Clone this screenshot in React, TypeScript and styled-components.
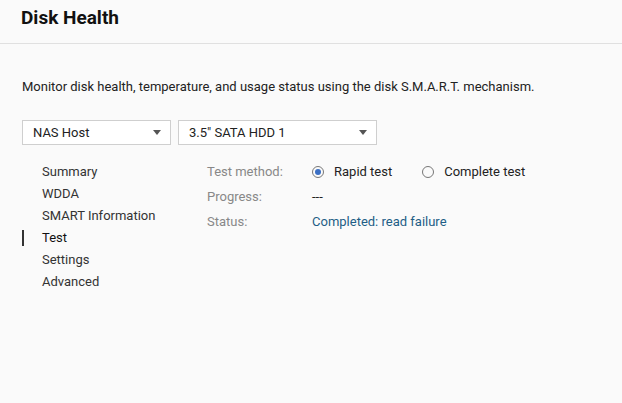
import styled, { createGlobalStyle } from 'styled-components';

const GlobalStyle = createGlobalStyle`
  html, body {
    margin: 0;
    padding: 0;
    background: #fafafa;
    font-family: Roboto, "Liberation Sans", Arial, sans-serif;
  }
`;

const Page = styled.div`
  width: 622px;
  height: 403px;
  background: #fafafa;
  overflow: hidden;
`;

const Header = styled.header`
  height: 43px;
  border-bottom: 1px solid #e0e0e0;
  padding: 0 21px;
  display: flex;
  align-items: flex-start;
`;

const Title = styled.h1`
  margin: 5px 0 0;
  font-size: 19px;
  font-weight: 700;
  color: #111;
  line-height: 26px;
`;

const Content = styled.div`
  padding: 33px 22px 0;
`;

const Description = styled.p`
  margin: 0;
  font-size: 13px;
  line-height: 20px;
  color: #222;
`;

const Selects = styled.div`
  display: flex;
  gap: 7px;
  margin-top: 23px;
`;

const Select = styled.div<{ $width: number }>`
  width: ${(p) => p.$width}px;
  height: 25px;
  box-sizing: border-box;
  border: 1px solid #cfcfcf;
  background: #fff;
  display: flex;
  align-items: center;
  justify-content: space-between;
  padding: 0 9px 0 10px;
  font-size: 13px;
  color: #222;
`;

const Caret = styled.span`
  width: 0;
  height: 0;
  border-left: 4px solid transparent;
  border-right: 4px solid transparent;
  border-top: 5px solid #555;
`;

const Body = styled.div`
  display: flex;
  margin-top: 16px;
`;

const Nav = styled.nav`
  width: 185px;
  display: flex;
  flex-direction: column;
`;

const NavItem = styled.div<{ $active?: boolean }>`
  position: relative;
  height: 22px;
  line-height: 22px;
  padding-left: 20px;
  font-size: 13px;
  color: ${(p) => (p.$active ? '#111' : '#333')};

  &::before {
    content: '';
    display: ${(p) => (p.$active ? 'block' : 'none')};
    position: absolute;
    left: 0;
    top: 3px;
    width: 2px;
    height: 16px;
    background: #333;
  }
`;

const Details = styled.div`
  display: grid;
  grid-template-columns: 105px auto;
  grid-auto-rows: 25px;
  align-items: start;
  font-size: 13px;
`;

const Label = styled.div`
  color: #888;
  line-height: 22px;
`;

const Value = styled.div<{ $link?: boolean }>`
  color: ${(p) => (p.$link ? '#1f5e86' : '#222')};
  line-height: 22px;
  display: flex;
  align-items: center;
`;

const RadioOption = styled.label`
  display: flex;
  align-items: center;
  gap: 10px;
  margin-right: 30px;
`;

const RadioCircle = styled.span<{ $checked?: boolean }>`
  width: 12px;
  height: 12px;
  box-sizing: border-box;
  border-radius: 50%;
  border: 1px solid #777;
  display: flex;
  align-items: center;
  justify-content: center;

  &::after {
    content: '';
    display: ${(p) => (p.$checked ? 'block' : 'none')};
    width: 6px;
    height: 6px;
    border-radius: 50%;
    background: #3b6fc4;
  }
`;

const navItems = ['Summary', 'WDDA', 'SMART Information', 'Test', 'Settings', 'Advanced'];

export default function App() {
  return (
    <Page>
      <GlobalStyle />
      <Header>
        <Title>Disk Health</Title>
      </Header>
      <Content>
        <Description>
          Monitor disk health, temperature, and usage status using the disk S.M.A.R.T. mechanism.
        </Description>
        <Selects>
          <Select $width={149}>
            NAS Host
            <Caret />
          </Select>
          <Select $width={199}>
            3.5" SATA HDD 1
            <Caret />
          </Select>
        </Selects>
        <Body>
          <Nav>
            {navItems.map((item) => (
              <NavItem key={item} $active={item === 'Test'}>
                {item}
              </NavItem>
            ))}
          </Nav>
          <Details>
            <Label>Test method:</Label>
            <Value>
              <RadioOption>
                <RadioCircle $checked />
                Rapid test
              </RadioOption>
              <RadioOption>
                <RadioCircle />
                Complete test
              </RadioOption>
            </Value>
            <Label>Progress:</Label>
            <Value>---</Value>
            <Label>Status:</Label>
            <Value $link>Completed: read failure</Value>
          </Details>
        </Body>
      </Content>
    </Page>
  );
}
